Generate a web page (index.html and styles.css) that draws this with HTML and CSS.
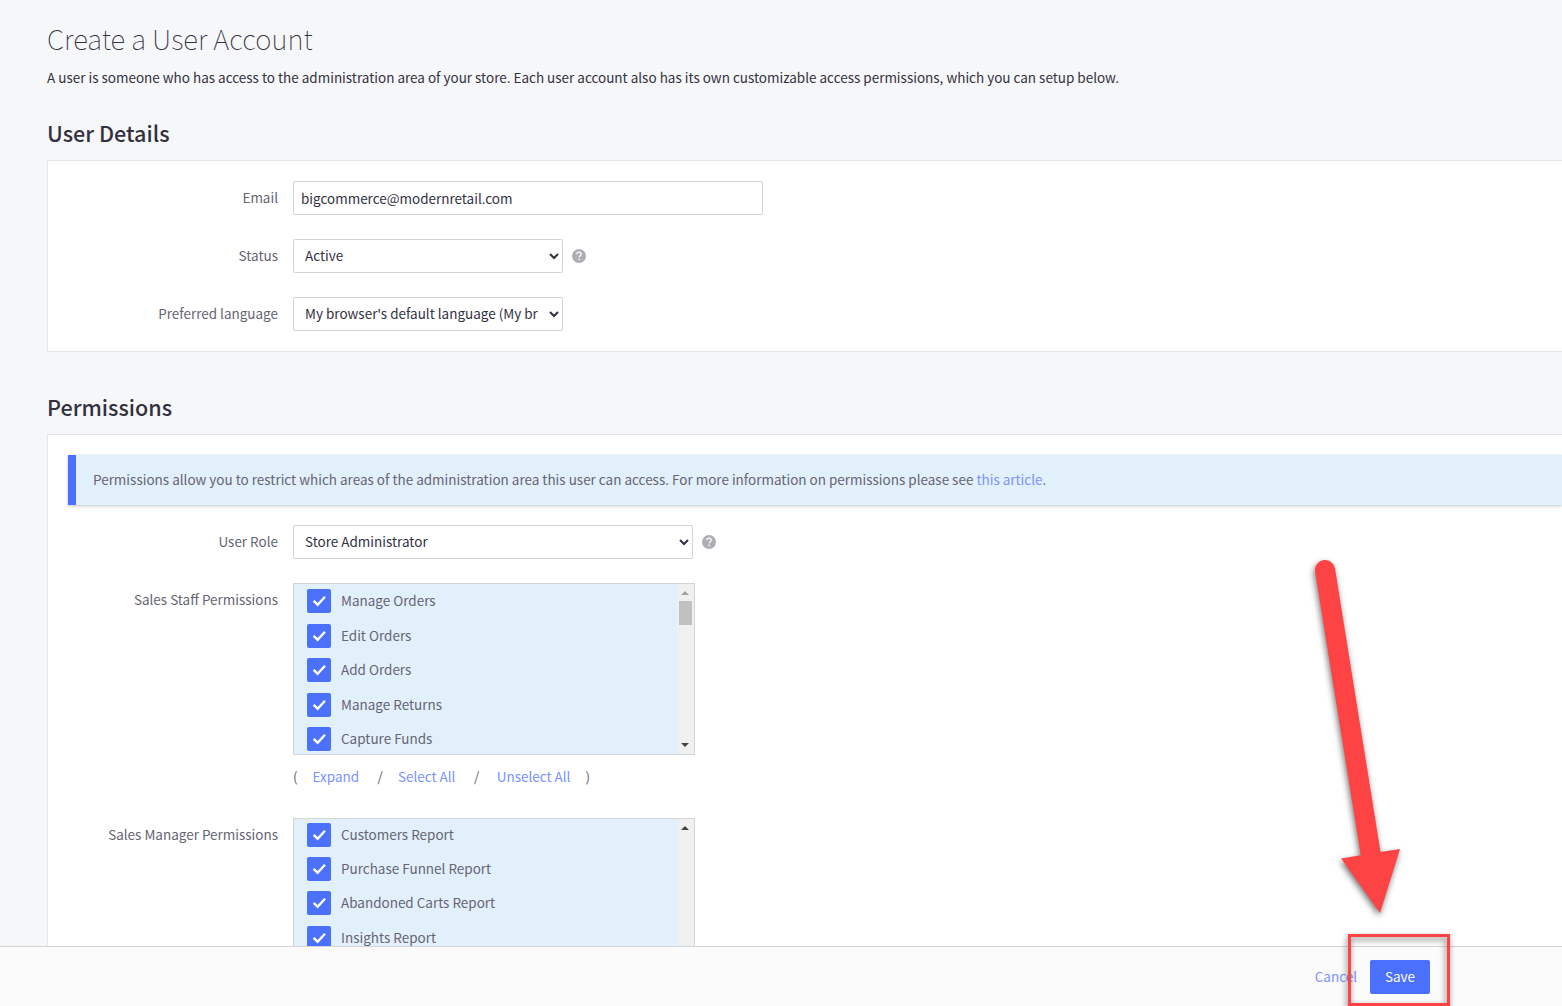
FILE: index.html
```html
<!DOCTYPE html>
<html lang="en">

<head>
  <meta charset="UTF-8">
  <meta name="viewport" content="width=device-width, initial-scale=1.0">
  <title>Create a User Account</title>
  <link rel="stylesheet" href="styles.css">
</head>

<body>
  <svg class="sprite" aria-hidden="true">
    <symbol id="check" viewBox="0 0 24 24">
      <path d="M6.6 11.9l4 3.8 7.4-8" fill="none" stroke="#fff" stroke-width="2.4" />
    </symbol>
    <symbol id="help" viewBox="0 0 14 14">
      <circle cx="7" cy="7" r="7" fill="#aeaeb5" />
      <path d="M4.8 5.3c0-1.3.9-2.1 2.2-2.1s2.2.8 2.2 1.9c0 1.5-2 1.6-2 3.2" fill="none" stroke="#fff" stroke-width="1.3" />
      <circle cx="7.1" cy="10.3" r=".9" fill="#fff" />
    </symbol>
  </svg>

  <main class="content">
    <h1>Create a User Account</h1>
    <p class="intro">A user is someone who has access to the administration area of your store. Each user account also has its own customizable access permissions, which you can setup below.</p>

    <h2>User Details</h2>
    <section class="panel">
      <div class="field">
        <label for="email">Email</label>
        <input class="input" id="email" type="text" value="bigcommerce@modernretail.com">
      </div>
      <div class="field">
        <label for="status">Status</label>
        <select class="select" id="status">
          <option>Active</option>
        </select>
        <svg class="help"><use href="#help" /></svg>
      </div>
      <div class="field">
        <label for="language">Preferred language</label>
        <select class="select" id="language">
          <option>My browser's default language (My browser's default language)</option>
        </select>
      </div>
    </section>

    <h2>Permissions</h2>
    <section class="panel">
      <div class="notice">Permissions allow you to restrict which areas of the administration area this user can access. For more information on permissions please see <a href="#">this article</a>.</div>
      <div class="field">
        <label for="role">User Role</label>
        <select class="select wide" id="role">
          <option>Store Administrator</option>
        </select>
        <svg class="help"><use href="#help" /></svg>
      </div>
      <div class="field">
        <label>Sales Staff Permissions</label>
        <div>
          <div class="listbox">
            <ul class="list">
              <li><svg class="check"><use href="#check" /></svg>Manage Orders</li>
              <li><svg class="check"><use href="#check" /></svg>Edit Orders</li>
              <li><svg class="check"><use href="#check" /></svg>Add Orders</li>
              <li><svg class="check"><use href="#check" /></svg>Manage Returns</li>
              <li><svg class="check"><use href="#check" /></svg>Capture Funds</li>
            </ul>
            <div class="scrollbar">
              <svg class="arrow off" viewBox="0 0 8 4"><path d="M0 4l4-4 4 4z" /></svg>
              <div class="thumb"></div>
              <svg class="arrow down" viewBox="0 0 8 4"><path d="M0 0l4 4 4-4z" /></svg>
            </div>
          </div>
          <div class="actions">
            <span>(</span>
            <a class="expand" href="#">Expand</a>
            <span>/</span>
            <a class="select-all" href="#">Select All</a>
            <span>/</span>
            <a class="unselect-all" href="#">Unselect All</a>
            <span>)</span>
          </div>
        </div>
      </div>
      <div class="field">
        <label>Sales Manager Permissions</label>
        <div class="listbox">
          <ul class="list scrolled">
            <li><svg class="check"><use href="#check" /></svg>Customers Report</li>
            <li><svg class="check"><use href="#check" /></svg>Purchase Funnel Report</li>
            <li><svg class="check"><use href="#check" /></svg>Abandoned Carts Report</li>
            <li><svg class="check"><use href="#check" /></svg>Insights Report</li>
          </ul>
          <div class="scrollbar">
            <svg class="arrow" viewBox="0 0 8 4"><path d="M0 4l4-4 4 4z" /></svg>
          </div>
        </div>
      </div>
    </section>
  </main>

  <footer class="footer">
    <a class="cancel" href="#">Cancel</a>
    <button class="save" type="button">Save</button>
  </footer>

  <!-- callout drawn over the page -->
  <svg class="callout" viewBox="0 0 1562 1006">
    <path d="M1315.1 571.5A10 10 0 0 1 1335 568.5L1380.5 852L1400 849L1380 913L1341.2 858.5L1360.8 855.3Z" fill="#fd4343" />
    <rect x="1349.5" y="935.5" width="99" height="69" fill="none" stroke="#fd4343" stroke-width="3" />
  </svg>
</body>

</html>
```

FILE: styles.css
```css
* {
  box-sizing: border-box;
}

html,
body {
  height: 100%;
}

body {
  margin: 0;
  display: flex;
  flex-direction: column;
  overflow: hidden;
  background: #f6f7f9;
  color: #34313f;
  font-family: "Noto Sans CJK SC", "Noto Sans", sans-serif;
  font-size: 13.49px;
  line-height: 24px;
}

a {
  color: #7a92ff;
  text-decoration: none;
}

.sprite {
  display: none;
}

.content {
  flex: 1;
  min-height: 0;
  overflow: hidden;
  padding: 19px 0 0 47px;
}

h1 {
  margin: 0;
  font-size: 27.6px;
  font-weight: 100;
  line-height: 38px;
  white-space: nowrap;
}

.intro {
  margin: 8px 0 30px;
  white-space: nowrap;
}

h2 {
  margin: 0 0 13px;
  font-size: 21.6px;
  font-weight: 500;
  line-height: 28px;
}

.panel {
  margin-bottom: 41px;
  padding: 20px 0 20px 20px;
  border: 1px solid #e2e5ec;
  border-right: 0;
  background: #fff;
}

.field {
  display: flex;
  align-items: flex-start;
  margin-bottom: 24px;
}

.field:last-child {
  margin-bottom: 0;
}

.field label {
  width: 210px;
  margin-right: 15px;
  line-height: 32px;
  text-align: right;
  color: #666472;
}

.input,
.select {
  height: 34px;
  margin: 0;
  border: 1px solid #d3d4d8;
  border-radius: 2px;
  background: #fff;
  color: #34313f;
  font: inherit;
}

.input {
  width: 470px;
  padding: 0 7px 1px;
}

.select {
  width: 270px;
  padding: 0 8px 2px 7px;
}

.select.wide {
  width: 400px;
}

.help {
  width: 14px;
  height: 14px;
  margin: 10px 0 0 9px;
}

.notice {
  height: 50px;
  margin-bottom: 20px;
  padding-left: 17px;
  border-left: 8px solid #4b71fc;
  background: #e2f0fc;
  box-shadow: 0 1px 3px rgba(0, 0, 0, .25);
  color: #666472;
  line-height: 48px;
  white-space: nowrap;
}

.listbox {
  display: flex;
  width: 402px;
  height: 172px;
  overflow: hidden;
  border: 1px solid #d3d4d8;
  background: #e2f0fc;
}

.list {
  flex: 1;
  margin: 0;
  padding: 5.4px 0 0 13px;
  list-style: none;
}

.list.scrolled {
  padding-top: 3.6px;
}

.list li {
  display: flex;
  align-items: flex-start;
  height: 34.4px;
  color: #666472;
  line-height: 22px;
}

.check {
  width: 24px;
  height: 24px;
  margin-right: 10px;
  border-radius: 2px;
  background: #4b71fc;
}

.scrollbar {
  display: flex;
  flex-direction: column;
  align-items: center;
  width: 17px;
  padding: 7px 1px 7px 0;
  background: #f0f0f0;
}

.arrow {
  width: 8px;
  height: 4px;
  fill: #444;
}

.arrow.off {
  fill: #a3a3a3;
}

.arrow.down {
  margin-top: auto;
}

.thumb {
  width: 13px;
  height: 24px;
  margin-top: 6px;
  background: #c1c1c1;
}

.actions {
  display: flex;
  height: 39px;
  padding-top: 9px;
  color: #666472;
}

.expand {
  margin: 0 18.5px 0 15px;
}

.select-all {
  margin: 0 18.5px 0 15px;
}

.unselect-all {
  margin: 0 15px 0 17.5px;
}

.footer {
  display: flex;
  align-items: center;
  justify-content: flex-end;
  height: 60px;
  padding-right: 132px;
  border-top: 1px solid #d3d4d8;
  background: #fbfbfb;
}

.cancel {
  padding-bottom: 2px;
}

.save {
  width: 60px;
  height: 34px;
  margin-left: 13px;
  padding: 0 0 2px;
  border: 0;
  border-radius: 2px;
  background: #4b71fc;
  color: #fff;
  font: inherit;
}

.callout {
  position: absolute;
  top: 0;
  left: 0;
  width: 1562px;
  height: 1006px;
  pointer-events: none;
  filter: drop-shadow(-1px 3px 3px rgba(0, 0, 0, .55));
}
```
